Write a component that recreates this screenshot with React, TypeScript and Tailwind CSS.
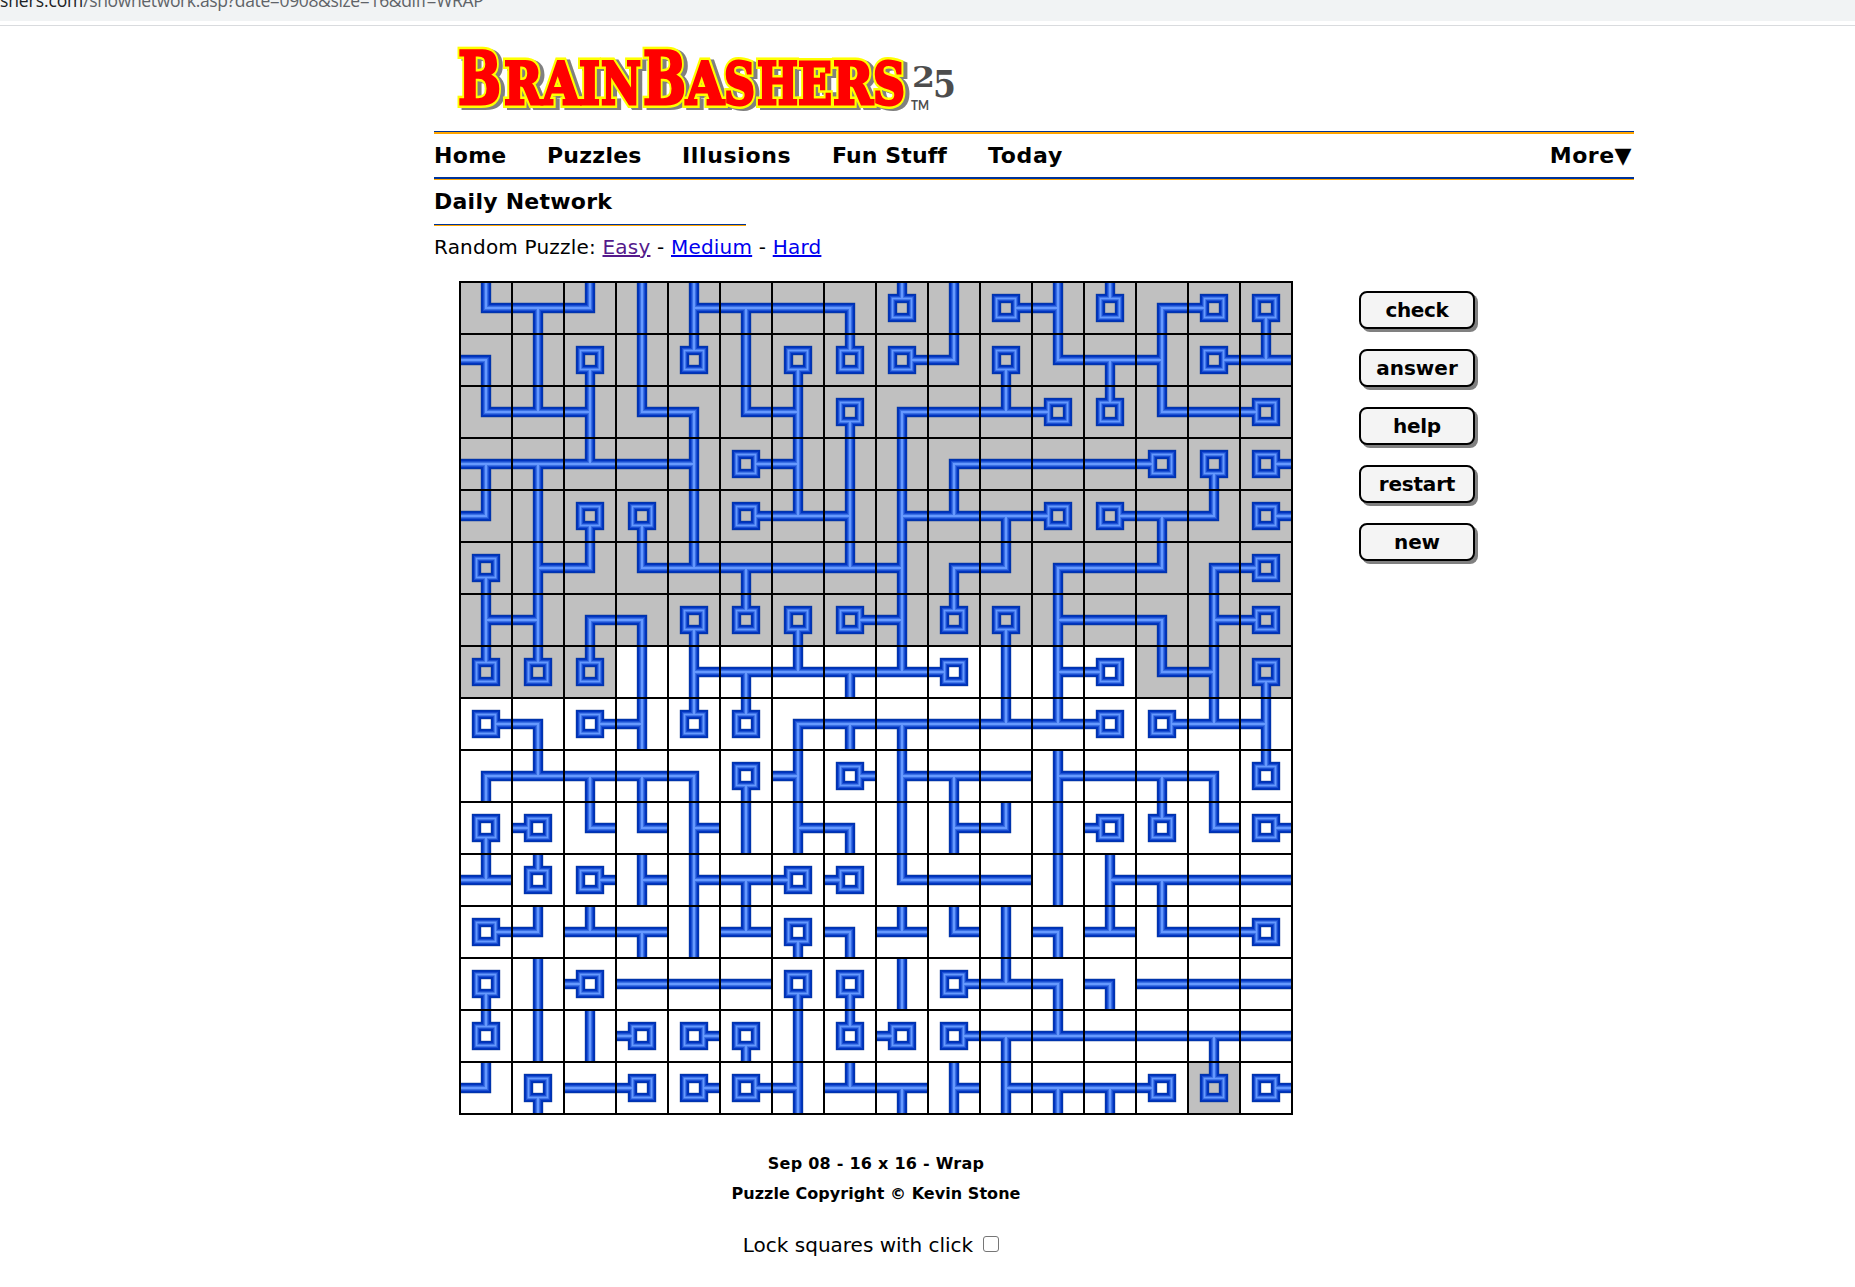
const ROWS = [
  "3e957eac152d1684", "c54515412943ed2b", "3bd3c3d46ab813a8", "eebad2d556aaa842",
  "954452bd7be82e92", "4793beabd696a968", "7d6c4142d147ac78", "11157ebeb85783d4",
  "2c2d116eeabb82bd", "6beec4d27ea7aec1", "4833757c57958132", "b1277e883aa57eaa",
  "29be5b4cb35cb3a8", "458aaa4452bccaaa", "1558245182ebaaea", "94a822dbe77ee812",
];

// Pipe layers from the outside in: half width and colour.
const LAYERS: [number, string][] = [
  [5.2, "#1f4294"],
  [5, "#0034ad"],
  [4, "#0033c0"],
  [3, "#1b4fd2"],
  [2, "#3a70e4"],
  [1, "#6699ff"],
];

const box = (x: number, y: number, w: number, h: number) => `M${x} ${y}h${w}v${h}h${-w}z`;

// Bits of a cell: 1 north, 2 east, 4 south, 8 west. A single bit is an end terminal.
function Tile({ bits, locked }: { bits: number; locked: boolean }) {
  const isEnd = bits === 1 || bits === 2 || bits === 4 || bits === 8;
  return (
    <svg width="50" height="50" viewBox="0 0 50 50" className={locked ? "block bg-[#c0c0c0]" : "block bg-white"}>
      {LAYERS.map(([h, color]) => {
        const near = isEnd ? 16 : 25 + h;
        const far = 50 - near;
        let d = "";
        if (bits === 5) d = box(25 - h, 0, 2 * h, 50);
        else if (bits === 10) d = box(0, 25 - h, 50, 2 * h);
        else {
          if (bits & 1) d += box(25 - h, 0, 2 * h, near);
          if (bits & 4) d += box(25 - h, far, 2 * h, near);
          if (bits & 8) d += box(0, 25 - h, near, 2 * h);
          if (bits & 2) d += box(far, 25 - h, near, 2 * h);
        }
        return (
          <g key={h} fill={color}>
            <path d={d} />
            {isEnd ? (
              <rect x={15.5} y={15.5} width={19} height={19} fill="none" stroke={color} strokeWidth={h === 1 ? 1.4 : 2 * h - 1} />
            ) : null}
          </g>
        );
      })}
    </svg>
  );
}

function isLocked(r: number, c: number) {
  return r < 7 || (r === 7 && (c < 3 || c > 12)) || (r === 15 && c === 14);
}

// Each letter: glyph, left edge, width, font size.
const LETTERS: [string, number, number, number][] = [
  ["B", 4, 43, 73], ["R", 50, 38, 58], ["A", 88, 38, 58], ["I", 125, 21, 58], ["N", 147, 40, 58],
  ["B", 189, 43, 73], ["A", 232, 38, 58], ["S", 270, 31, 58], ["H", 303, 41, 58], ["E", 344, 34, 58],
  ["R", 379, 40, 58], ["S", 419, 32, 58],
];

function Logo() {
  return (
    <svg width="510" height="70" viewBox="0 0 510 70" className="block overflow-visible">
      <g className="drop-shadow-[4px_2px_0_#808080]" fontFamily="DejaVu Serif" fontWeight="700">
        <use href="#wordmark" fill="#ffff00" stroke="#ffff00" strokeWidth="8" />
        <g fill="#ff0000" stroke="#ff0000" strokeWidth="3">
          <g id="wordmark">
            {LETTERS.map(([ch, x, w, size]) => (
              <text key={x} x={x} y={60.5} fontSize={size} textLength={w} lengthAdjust="spacingAndGlyphs">{ch}</text>
            ))}
          </g>
        </g>
      </g>
      <g fill="#4d4d4d" fontFamily="DejaVu Serif" fontWeight="700">
        <text x="458" y="44" fontSize="27" textLength="23" lengthAdjust="spacingAndGlyphs">2</text>
        <text x="479" y="54" fontSize="38" textLength="23" lengthAdjust="spacingAndGlyphs">5</text>
        <text x="457" y="67" fontFamily="Lato" fontSize="12.5" textLength="18" lengthAdjust="spacingAndGlyphs">TM</text>
      </g>
    </svg>
  );
}

const NAV: [string, string][] = [
  ["Home", "w-[113px] tracking-[0.3px]"],
  ["Puzzles", "w-[135px] tracking-[0.25px]"],
  ["Illusions", "w-[150px] tracking-[0.65px]"],
  ["Fun Stuff", "w-[156px] tracking-[0.1px]"],
  ["Today", "tracking-[0.7px]"],
];

const BUTTONS: [string, string][] = [
  ["check", "tracking-[-0.4px]"],
  ["answer", "tracking-normal"],
  ["help", "tracking-[-0.3px]"],
  ["restart", "tracking-[-0.2px]"],
  ["new", "tracking-[-0.1px]"],
];

export default function App() {
  return (
    <div className="h-[1287px] w-[1855px] overflow-hidden bg-white font-['Verdana','DejaVu_Sans',sans-serif] text-black">
      <div className="h-[21px] overflow-hidden bg-[#f1f3f4]">
        <div className="-mt-[12px] whitespace-pre font-['Open_Sans',sans-serif] text-[17.5px] leading-6 tracking-[-0.36px] text-[#5f6368]">
          <span className="tracking-[-0.1px] text-[#202124]">shers.com</span>/shownetwork.asp?date=0908&amp;size=16&amp;diff=WRAP
        </div>
      </div>
      <div className="mt-1 h-px bg-[#d9dbde]" />

      <div className="ml-[434px] w-[1200px]">
        <header className="h-[105px] pt-[17px] pl-[20px]">
          <Logo />
        </header>
        <nav className="flex h-[49px] items-center border-t border-[#003399] pb-[2px] text-[22px] font-bold shadow-[inset_0_2px_0_#ffa500,inset_0_-1px_0_#ffa500,inset_0_-3px_0_#003399]">
          {NAV.map(([label, look]) => (
            <a key={label} className={`${look} whitespace-nowrap`}>{label}</a>
          ))}
          <a className="ml-auto pr-[2px] tracking-[0.5px]">More▼</a>
        </nav>
        <h1 className="h-[46px] w-[312px] pt-[6px] text-[22px] leading-8 font-bold tracking-[0.25px] shadow-[inset_0_-1px_0_#ffa500,inset_0_-2px_0_#003399]">Daily Network</h1>
        <p className="mt-[5px] text-[20px] leading-8 tracking-[0.2px]">
          Random Puzzle: <a className="text-[#551a8b] underline">Easy</a> - <a className="text-[#0000ee] underline">Medium</a> - <a className="text-[#0000ee] underline">Hard</a>
        </p>

        <div className="mt-[18px] ml-[25px] flex items-start">
          <div className="grid grid-cols-[repeat(16,50px)] gap-[2px] border-2 border-black bg-black">
            {ROWS.map((row, r) =>
              row.split("").map((ch, c) => <Tile key={`${r}-${c}`} bits={parseInt(ch, 16)} locked={isLocked(r, c)} />),
            )}
          </div>
          <div className="mt-[10px] ml-[66px] flex flex-col gap-[20px]">
            {BUTTONS.map(([label, look]) => (
              <button key={label} className={`${look} h-[38px] w-[116px] rounded-[8px] border-2 border-black bg-[#f4f4f4] text-[20px] leading-[34px] font-bold shadow-[3px_3px_0_#808080]`}>{label}</button>
            ))}
          </div>
        </div>

        <div className="mt-[34px] ml-[25px] w-[834px] text-center">
          <p className="text-[16px] leading-[30px] font-bold tracking-[0.25px]">Sep 08 - 16 x 16 - Wrap</p>
          <p className="text-[16px] leading-[30px] font-bold tracking-[0.05px]">Puzzle Copyright © Kevin Stone</p>
          <label className="mt-[20px] flex items-center justify-center gap-[10px] pr-[10px] text-[20px] leading-8">
            Lock squares with click
            <input type="checkbox" className="mb-[3px] h-4 w-4 appearance-none rounded-[3px] border border-[#767676] bg-white" />
          </label>
        </div>
      </div>
    </div>
  );
}
